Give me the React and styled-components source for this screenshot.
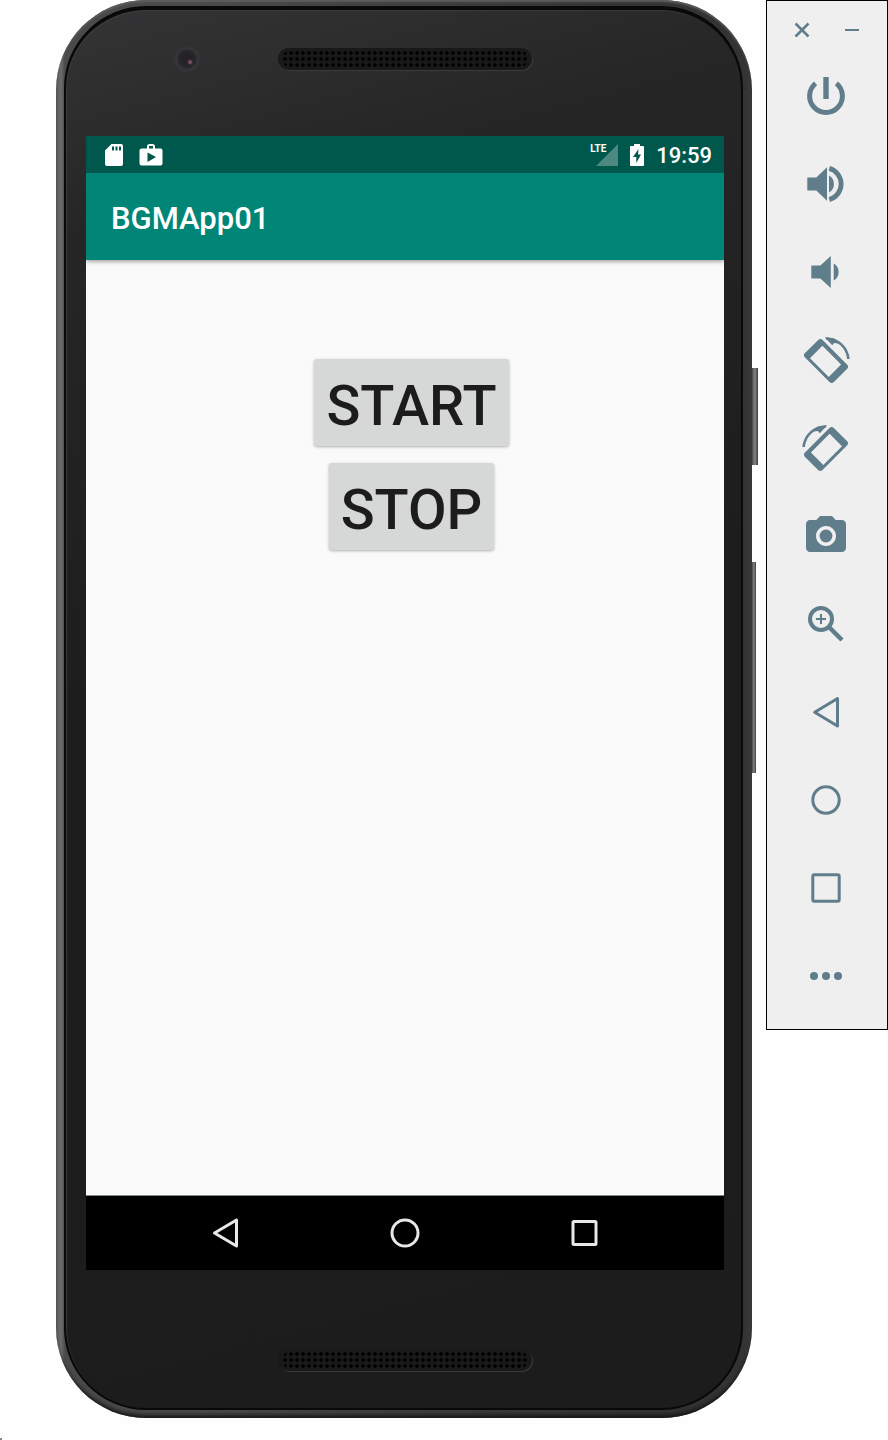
import React from "react";
import styled, { createGlobalStyle, css } from "styled-components";

const GlobalStyle = createGlobalStyle`
  *, *::before, *::after { box-sizing: border-box; }
  body { margin: 0; background: #fefefe; font-family: Roboto, "Liberation Sans", sans-serif; }
  button { margin: 0; padding: 0; border: 0; background: none; font: inherit; color: inherit; cursor: pointer; }
  svg { display: block; }
`;

const Desktop = styled.main`
  display: flex;
  align-items: stretch;
  gap: 14px;
  min-height: 100vh;
  padding-left: 56px;
`;

/* ---------- phone body ---------- */

const Device = styled.section`
  position: relative;
  flex: 1;
  min-width: 0;
  display: flex;
  margin-bottom: 22px;
  padding: 6px 9px 8px 8px;
  border-radius: 90px;
  background: linear-gradient(to right, #585858, #6c6c6c 5px, #4a4a4a 9px, #4a4a4a 20%, #353334 80%, #343233 calc(100% - 8px), #3b3839);
  box-shadow: inset 0 -6px 4px -3px #161616, inset 0 3px 2px -1px #5e5e5e;
`;

const Face = styled.div`
  flex: 1;
  min-width: 0;
  display: grid;
  grid-template-rows: 126px 1fr 138px;
  border: solid #090909;
  border-width: 4px 2px 2px 2px;
  border-radius: 82px;
  padding: 0 17px 0 20px;
  background: linear-gradient(165deg, #343436 0%, #262626 14%, #1d1d1d 45%, #1c1c1c 100%);
  box-shadow: inset 1px 1px 1px #3c3c3c;
`;

const Bezel = styled.div`
  display: grid;
  grid-template-columns: 1fr 254px 1fr;
  align-items: center;
  align-self: start;
  height: 26px;
  margin-top: ${(p) => p.$top}px;
`;

const Camera = styled.span`
  justify-self: end;
  width: 26px;
  height: 26px;
  margin-right: 78px;
  border-radius: 50%;
  background: radial-gradient(circle at 62% 62%, #7c5560 0 1px, transparent 3px),
    radial-gradient(circle, #262129 0 6px, #29292b 9px, #343436 10px);
`;

const Grille = styled.span`
  grid-column: 2;
  height: 22px;
  border-radius: 11px;
  padding: 2px 4px;
  background: #191919;
  box-shadow: 1px 1px 0 #3a3a3a;
  &::before {
    content: "";
    display: block;
    height: 18px;
    border-radius: 9px;
    background: radial-gradient(circle, #000 1px, #0a0a0a 2px, transparent 2px) 0 0 / 6px 6px;
  }
`;

const SideKey = styled.span`
  position: absolute;
  left: 100%;
  top: ${(p) => p.$top}px;
  width: ${(p) => p.$width}px;
  height: ${(p) => p.$height}px;
  background: linear-gradient(to right, #4a4a4a, #858585 50%, #3a3a3a);
`;

/* ---------- phone screen ---------- */

const Screen = styled.div`
  display: flex;
  flex-direction: column;
  background: #fafafa;
`;

const StatusBar = styled.div`
  display: flex;
  align-items: center;
  justify-content: space-between;
  height: 37px;
  padding: 0 12px 0 19px;
  background: #00574b;
  color: #fff;
`;

const StatusGroup = styled.div`
  display: flex;
  align-items: center;
  gap: ${(p) => p.$gap}px;
`;

const Signal = styled.span`
  display: flex;
  align-items: flex-start;
  position: relative;
  width: 28px;
  height: 22px;
  font: 700 10px/10px "Liberation Sans Narrow", Roboto, sans-serif;
  svg { position: absolute; right: 0; bottom: 0; }
  span { position: relative; }
`;

const Clock = styled.time`
  padding-top: 2px;
  font-size: 22px;
  line-height: 26px;
  font-weight: 500;
`;

const AppBar = styled.header`
  position: relative;
  display: flex;
  align-items: center;
  height: 87px;
  padding: 4px 25px 0;
  background: #008577;
  box-shadow: 0 1px 5px rgba(0, 0, 0, 0.45);
  clip-path: inset(0 0 -8px 0);
`;

const AppTitle = styled.h1`
  margin: 0;
  color: #fff;
  font-size: 31px;
  line-height: 36px;
  font-weight: 500;
`;

const AppBody = styled.div`
  flex: 1;
  display: flex;
  flex-direction: column;
  align-items: center;
  gap: 17px;
  padding: 99px 0 40px 13px;
`;

const AppButton = styled.button`
  height: 87px;
  padding: 6px 12px 0;
  border-radius: 3px;
  background: #d6d7d7;
  color: #1c1c1c;
  font-size: 56px;
  line-height: 66px;
  font-weight: 500;
  box-shadow: 0 1px 3px rgba(0, 0, 0, 0.3);
`;

const NavBar = styled.nav`
  display: flex;
  align-items: center;
  justify-content: center;
  gap: 119px;
  height: 75px;
  border-top: 1px solid #7d8a89;
  background: #000;
  color: #e8e8e8;
`;

/* ---------- emulator toolbar ---------- */

const Toolbar = styled.aside`
  flex: none;
  align-self: flex-start;
  width: 122px;
  padding-bottom: 9px;
  border: 1px solid #000;
  background: #efefef;
  color: #607d8b;
`;

const WindowButtons = styled.div`
  display: flex;
  justify-content: center;
  height: 51px;
  padding-top: 4px;
`;

const iconButton = css`
  display: flex;
  align-items: center;
  justify-content: center;
`;

const WindowButton = styled.button`
  ${iconButton}
  width: 50px;
  height: 50px;
`;

const ToolButton = styled.button`
  ${iconButton}
  width: 100%;
  height: 88px;
  padding-right: 2px;
`;

const NavButton = styled.button`
  ${iconButton}
  width: 60px;
  height: 60px;
`;

const CornerMark = styled.span`
  position: absolute;
  left: 0;
  bottom: 0;
  width: 2px;
  height: 2px;
  background: #8a8a8a;
`;

/* ---------- icons ---------- */

const Icon = ({ size = 60, box = 60, children, ...rest }) => (
  <svg width={size} height={size} viewBox={`0 0 ${box} ${box}`} fill="currentColor" aria-hidden="true" {...rest}>
    {children}
  </svg>
);

const line = { fill: "none", stroke: "currentColor" };

const RotateShape = () => (
  <>
    <path
      fillRule="evenodd"
      d="M22.2 10.1Q24.4 8 26.6 10.1L51 34.5Q53.2 36.7 51 38.9L37.9 52Q35.7 54.2 33.5 52L9 27.5Q6.8 25.3 9 23.1ZM26.4 15.8L14 28.2L32.7 46.9L45.1 34.5Z"
    />
    <path {...line} strokeWidth="2.6" d="M30 8.5A22.5 22.5 0 0 1 52.4 29" />
    <path d="M28.8 7.3L36.2 15.2L38.2 13L42.5 13.5L38 8.5Z" />
  </>
);

const tools = [
  {
    label: "Power",
    icon: (
      <Icon>
        <path {...line} strokeWidth="5" d="M19.6 17.4A16.4 16.4 0 1 0 40.4 17.4" />
        <rect x="27.3" y="11" width="5.4" height="22" />
      </Icon>
    ),
  },
  {
    label: "Volume up",
    icon: (
      <Icon>
        <path d="M11.300 23.500H20.300L31 13.300V46.700L20.300 36.500H11.300ZM33 21.500A9.800 9.800 0 0 1 33 38.500Z" />
        <path {...line} strokeWidth="4.800" d="M33.300 14.400A16.200 16.200 0 0 1 33.300 45.600" />
      </Icon>
    ),
  },
  {
    label: "Volume down",
    icon: (
      <Icon>
        <path d="M15.300 23.500H24.300L34.800 14V46L24.300 36.500H15.300ZM37.700 21.500A9.800 9.800 0 0 1 37.700 38.500Z" />
      </Icon>
    ),
  },
  { label: "Rotate left", icon: <Icon><RotateShape /></Icon> },
  {
    label: "Rotate right",
    icon: (
      <Icon>
        <g transform="translate(60 0) scale(-1 1)"><RotateShape /></g>
      </Icon>
    ),
  },
  {
    label: "Take screenshot",
    icon: (
      <Icon size={48} box={24}>
        <circle cx="12" cy="12" r="3.2" />
        <path d="M9 2L7.170 4H4c-1.100 0-2 .900-2 2v12c0 1.100.900 2 2 2h16c1.100 0 2-.900 2-2V6c0-1.100-.900-2-2-2h-3.170L15 2H9zm3 15c-2.760 0-5-2.240-5-5s2.240-5 5-5 5 2.240 5 5-2.240 5-5 5z" />
      </Icon>
    ),
  },
  {
    label: "Zoom",
    icon: (
      <Icon>
        <circle {...line} cx="25" cy="25" r="11" strokeWidth="4" />
        <path {...line} strokeWidth="2" d="M20 25h10M25 20v10" />
        <path {...line} strokeWidth="4.500" d="M33 33L46 46" />
      </Icon>
    ),
  },
  {
    label: "Back",
    icon: (
      <Icon>
        <path {...line} strokeWidth="3" strokeLinejoin="round" d="M18.700 30.200L41.500 16.500V44Z" />
      </Icon>
    ),
  },
  { label: "Home", icon: <Icon><circle {...line} cx="30" cy="30" r="13.200" strokeWidth="3" /></Icon> },
  {
    label: "Overview",
    icon: <Icon><rect {...line} x="16.800" y="16.800" width="26.400" height="26.400" rx="1.500" strokeWidth="3" /></Icon>,
  },
  {
    label: "More",
    icon: (
      <Icon>
        <circle cx="18" cy="30" r="4" />
        <circle cx="30" cy="30" r="4" />
        <circle cx="42" cy="30" r="4" />
      </Icon>
    ),
  },
];

const Phone = () => (
  <Device aria-label="Phone">
    <Face>
      <Bezel $top={36}>
        <Camera />
        <Grille />
      </Bezel>
      <Screen>
        <StatusBar>
          <StatusGroup $gap={16}>
            <svg width="18" height="22" viewBox="0 0 18 22" fill="currentColor" aria-hidden="true">
              <path fillRule="evenodd" d="M6.500 0H16Q18 0 18 2V20Q18 22 16 22H2Q0 22 0 20V6.500ZM7 2.500V6.500H9V2.500ZM10.500 2.500V6.500H12.500V2.500ZM14 2.500V6.500H16V2.500Z" />
            </svg>
            <svg width="24" height="22" viewBox="0 0 24 22" fill="currentColor" aria-hidden="true">
              <path fillRule="evenodd" d="M8 4.500V2.500Q8 0 10.500 0H13.500Q16 0 16 2.500V4.500H21.500Q23.500 4.500 23.500 6.500V19.500Q23.500 21.500 21.500 21.500H2.500Q.500 21.500 .500 19.500V6.500Q.500 4.500 2.500 4.500ZM10 4.500H14V2H10ZM8.500 8.500V18L17 13Z" />
            </svg>
          </StatusGroup>
          <StatusGroup $gap={12}>
            <Signal>
              <svg width="22" height="22" viewBox="0 0 22 22" fill="#4d8981" aria-hidden="true">
                <path d="M22 0V22H0Z" />
              </svg>
              <span>LTE</span>
            </Signal>
            <svg width="14" height="22" viewBox="0 0 14 22" fill="currentColor" aria-hidden="true">
              <path fillRule="evenodd" d="M4 0H10V2H13Q14 2 14 3V21Q14 22 13 22H1Q0 22 0 21V3Q0 2 1 2H4ZM8.500 5L3 13H6.300V19L11 10.500H8Z" />
            </svg>
            <Clock>19:59</Clock>
          </StatusGroup>
        </StatusBar>
        <AppBar>
          <AppTitle>BGMApp01</AppTitle>
        </AppBar>
        <AppBody>
          <AppButton type="button">START</AppButton>
          <AppButton type="button">STOP</AppButton>
        </AppBody>
        <NavBar>
          <NavButton type="button" aria-label="Back">
            <Icon><path {...line} strokeWidth="3" strokeLinejoin="round" d="M18.500 30L40.500 17V43Z" /></Icon>
          </NavButton>
          <NavButton type="button" aria-label="Home">
            <Icon><circle {...line} cx="30" cy="30" r="13" strokeWidth="3" /></Icon>
          </NavButton>
          <NavButton type="button" aria-label="Overview">
            <Icon><rect {...line} x="19" y="18.500" width="23" height="23" rx="1" strokeWidth="3" /></Icon>
          </NavButton>
        </NavBar>
      </Screen>
      <Bezel $top={77}>
        <Grille />
      </Bezel>
    </Face>
    <SideKey $top={368} $width={6} $height={97} />
    <SideKey $top={562} $width={4} $height={211} />
  </Device>
);

export default function App() {
  return (
    <>
      <GlobalStyle />
      <Desktop>
        <Phone />
        <Toolbar aria-label="Emulator controls">
          <WindowButtons>
            <WindowButton type="button" aria-label="Close">
              <Icon size={20} box={20}><path {...line} strokeWidth="2.500" d="M3.500 3.500L16.500 16.500M16.500 3.500L3.500 16.500" /></Icon>
            </WindowButton>
            <WindowButton type="button" aria-label="Minimize">
              <Icon size={20} box={20}><path {...line} strokeWidth="2" d="M3 10H17" /></Icon>
            </WindowButton>
          </WindowButtons>
          {tools.map((t) => (
            <ToolButton key={t.label} type="button" aria-label={t.label}>
              {t.icon}
            </ToolButton>
          ))}
        </Toolbar>
      </Desktop>
      <CornerMark />
    </>
  );
}
